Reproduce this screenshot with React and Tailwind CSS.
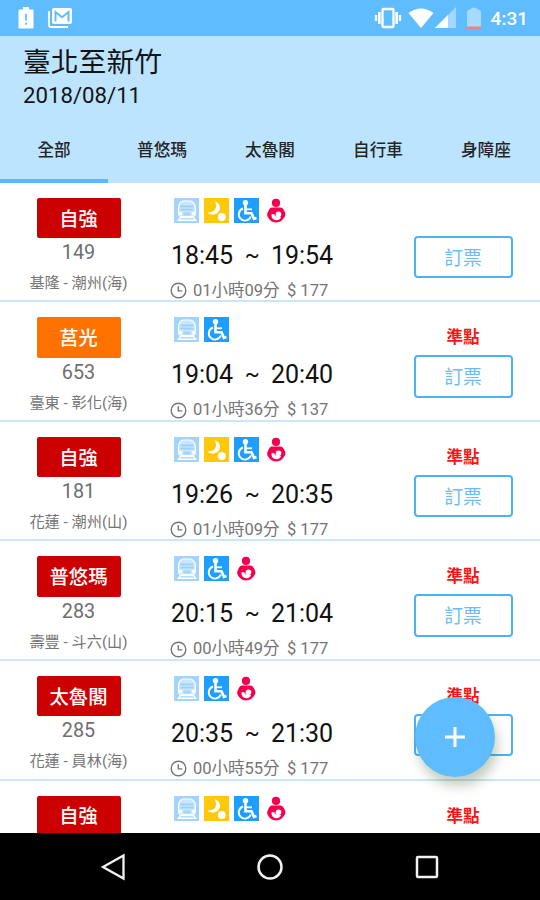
const TABS = ["全部", "普悠瑪", "太魯閣", "自行車", "身障座"];

const TRAINS = [
  { type: "自強", no: "149", route: "基隆 - 潮州(海)", icons: ["train", "night", "wheel", "baby"], from: "18:45", to: "19:54", duration: "01小時09分", price: 177 },
  { type: "莒光", no: "653", route: "臺東 - 彰化(海)", icons: ["train", "wheel"], from: "19:04", to: "20:40", duration: "01小時36分", price: 137, onTime: true },
  { type: "自強", no: "181", route: "花蓮 - 潮州(山)", icons: ["train", "night", "wheel", "baby"], from: "19:26", to: "20:35", duration: "01小時09分", price: 177, onTime: true },
  { type: "普悠瑪", no: "283", route: "壽豐 - 斗六(山)", icons: ["train", "wheel", "baby"], from: "20:15", to: "21:04", duration: "00小時49分", price: 177, onTime: true },
  { type: "太魯閣", no: "285", route: "花蓮 - 員林(海)", icons: ["train", "wheel", "baby"], from: "20:35", to: "21:30", duration: "00小時55分", price: 177, onTime: true },
  { type: "自強", no: "", route: "", icons: ["train", "night", "wheel", "baby"], onTime: true },
];

const TrainIcon = () => (
  <svg viewBox="0 0 25 25" className="size-[25px]">
    <rect width="25" height="25" fill="#a3d4fb" />
    <path d="M9 3h7.500q4.800 1.500 4.800 7v5q0 3.500-3 3.500H7.500q-3 0-3-3.500v-5Q4.500 4.500 9 3z" fill="#c9e6fd" stroke="#fff" strokeWidth="1.200" />
    <path d="M6.500 7.500h13v5h-13z" fill="#9acffa" />
    <path d="M6.500 10h13" stroke="#d9eefe" strokeWidth="1" />
    <path d="M5 14h3v3H5zM18 14h3v3h-3z" fill="#fff" />
    <path d="M9.500 14.500h7v3h-7z" fill="#a3d4fb" />
    <path d="M7 19.500h12M3.500 22.300h19M6.500 19l-1.500 3M19.500 19l1.500 3" fill="none" stroke="#fff" strokeWidth="1.500" />
  </svg>
);

const NightIcon = () => (
  <svg viewBox="0 0 25 25" className="size-[25px]">
    <rect width="25" height="25" fill="#ffc907" />
    <path d="M10.500 3C14 9 11.500 15 3.300 14.600 7.500 18.800 16.500 16 16 9.200 15.700 6 13 3.900 10.500 3z" fill="#fff" />
    <circle cx="17.800" cy="19" r="3.900" fill="#fff" />
  </svg>
);

const WheelIcon = () => (
  <svg viewBox="0 0 25 25" className="size-[25px]">
    <rect width="25" height="25" fill="#1e9fff" />
    <circle cx="11.500" cy="4.700" r="2.700" fill="#fff" />
    <g fill="none" stroke="#fff">
      <path d="M11.500 7v8.300h6l2.500 5.500 2.500-.8" strokeWidth="2.600" />
      <path d="M12 11.300h6" strokeWidth="1.800" />
      <path d="M9 10.500a6.200 6.200 0 1 0 7.800 8" strokeWidth="1.900" />
    </g>
  </svg>
);

const BabyIcon = () => (
  <svg viewBox="0 0 25 25" className="size-[25px]">
    <circle cx="12" cy="4.900" r="4.100" fill="#f5004f" />
    <path d="M8 9.500h8c2.500 0 3.800 2 4.700 4.300 1 2 .9 4.400-.5 5.800-1.800 3.200-4.600 4.900-7.700 4.900-3.800 0-6.600-1.500-8.300-4.700-1.500-1.900-1.300-4.100 0-6.200C5.100 11.300 6 9.500 8 9.500z" fill="#f5004f" />
    <circle cx="14.500" cy="16.300" r="2.800" fill="#fff" />
    <path d="M7.500 16.500c1.500-.8 3.200-.6 4.200.6 1.300 1.600 4.100 1 5.300 2.200-.6 2-2.500 2.900-4.700 2.900-2.900 0-5-2-4.800-5.700z" fill="#fff" />
    <path d="M9 15.300l3.300 3.200" stroke="#f5004f" strokeWidth=".8" />
  </svg>
);

const ClockIcon = () => (
  <svg viewBox="0 0 17 17" className="size-[17px]" fill="none" stroke="#757575" strokeWidth="1.400">
    <circle cx="8.500" cy="8.500" r="7.300" />
    <path d="M8.300 4.300v4.600h4" />
  </svg>
);

const ICONS = { train: TrainIcon, night: NightIcon, wheel: WheelIcon, baby: BabyIcon };

const StatusBar = () => (
  <div className="flex h-[35.5px] items-center justify-between bg-[#5fbcff] pl-[18px] pr-[12px]">
    <div className="flex items-center gap-[14px]">
      <svg viewBox="0 0 16 24" className="h-6 w-4">
        <path d="M1.500 3.500H5V1h6v2.500h3.500q1 0 1 1v17q0 1-1 1h-13q-1 0-1-1v-17q0-1 1-1z" fill="#fff" />
        <path d="M8 8v6.500M8 16.500v2.300" stroke="#5fbcff" strokeWidth="1.700" />
      </svg>
      <svg viewBox="0 0 24 22" className="h-[22px] w-6">
        <rect x="4" y="1" width="20" height="16" rx="2" fill="#fff" />
        <path d="M7.500 14.500V5l6.500 5.300L20.500 5v9.500" fill="none" stroke="#5fbcff" strokeWidth="1.900" />
        <path d="M1 4v14.500q0 1.500 1.500 1.500H20" fill="none" stroke="#fff" strokeWidth="1.800" />
      </svg>
    </div>
    <div className="flex items-center">
      <svg viewBox="0 0 28 22" className="mr-[6px] h-[22px] w-7" fill="none" stroke="#fff">
        <rect x="8.500" y="2" width="11" height="18" rx="1" strokeWidth="2.300" />
        <path d="M5.300 5v12M22.700 5v12" strokeWidth="2.600" />
        <path d="M2 8v6M26 8v6" strokeWidth="2.300" />
      </svg>
      <svg viewBox="0 0 26 20" className="mr-px h-5 w-[26px]">
        <path d="M.5 5Q13-4 25.500 5L13 20z" fill="#fff" />
      </svg>
      <svg viewBox="0 0 21 21" className="mr-[11px] h-[21px] w-[21px]">
        <path d="M21 0v21H0z" fill="#a2d8ff" />
        <path d="M13 8v13H0z" fill="#fff" />
      </svg>
      <svg viewBox="0 0 14 22" className="mr-[10px] h-[22px] w-[14px]">
        <path d="M0 4l3.500-2Q7-1 10.500 2L14 4v18H0z" fill="#a8daff" />
        <path d="M0 19.500h14V22H0z" fill="#ef8088" />
      </svg>
      <span className="pt-[3px] text-[19px] font-medium leading-6 text-white">4:31</span>
    </div>
  </div>
);

const Header = () => (
  <header className="h-[147px] bg-[#bde4ff] text-[#141414]">
    <h1 className="h-[44px] pl-[23px] pt-[7px] text-[27.800px] leading-[40px]">臺北至新竹</h1>
    <p className="h-[36px] pl-[23px] pt-px text-[22.200px] leading-[28px]">2018/08/11</p>
    <nav className="flex h-[67px]">
      {TABS.map((tab, i) => (
        <div
          key={tab}
          className={`flex w-[108px] justify-center border-b-[4.500px] pt-[24px] text-[16.600px] font-medium leading-[22px] text-[#262626] ${i === 0 ? "border-[#5cb9ff]" : "border-transparent"}`}
        >
          {tab}
        </div>
      ))}
    </nav>
  </header>
);

const TrainRow = ({ train }) => (
  <li className="flex h-[119.550px] shrink-0 border-b-2 border-[#cbe6fb]">
    <div className="flex w-[157px] flex-col items-center pt-[15px]">
      <div
        className={`flex h-[40.500px] w-[84px] items-center justify-center rounded-[2px] pt-[3px] text-[19.300px] font-medium leading-6 text-white ${train.type === "莒光" ? "bg-[#ff7200]" : "bg-[#cc0000]"}`}
      >
        {train.type}
      </div>
      <div className="mt-[2px] text-[19.800px] leading-[26px] text-[#6e6e6e]">{train.no}</div>
      <div className="mt-[7px] whitespace-nowrap text-[15.200px] leading-[20px] text-[#757575]">{train.route}</div>
    </div>
    <div className="w-[242.500px] pl-[17.400px] pt-[15px]">
      <div className="flex h-[25px] gap-[5px]">
        {train.icons.map((name) => {
          const Icon = ICONS[name];
          return <Icon key={name} />;
        })}
      </div>
      {train.from && (
        <>
          <div className="-ml-[3.500px] mt-[17px] flex text-[25px] leading-[32px] text-[#111]">
            <span className="w-[62.500px]">{train.from}</span>
            <span className="w-[37.500px] pb-[3px] text-center text-[22px] leading-[29px]">~</span>
            <span>{train.to}</span>
          </div>
          <div className="-ml-[4.500px] mt-[8px] flex items-center text-[16.500px] leading-[22px] text-[#757575]">
            <ClockIcon />
            <span className="ml-[6px]">{train.duration}</span>
            <span className="ml-[7.500px]">$ {train.price}</span>
          </div>
        </>
      )}
    </div>
    <div className="flex w-[127px] flex-col items-center pt-[25px]">
      <div className="h-[28px] text-[16.600px] font-bold leading-[22px] text-[#fb1414]">{train.onTime && "準點"}</div>
      {train.from && (
        <button className="h-[42.500px] w-[99px] rounded-[4px] border-2 border-[#4bb3f3] pt-[3px] text-[18.800px] leading-6 text-[#6bbcf8]">
          訂票
        </button>
      )}
    </div>
  </li>
);

const NavBar = () => (
  <div className="flex h-[67px] items-center justify-between bg-black pl-[100px] pr-[100px]">
    <svg viewBox="0 0 26 28" className="h-7 w-[26px]" fill="none" stroke="#f2f2f2" strokeWidth="2.300">
      <path d="M3 14L23.500 2.500v23z" />
    </svg>
    <svg viewBox="0 0 28 28" className="size-7" fill="none" stroke="#f2f2f2" strokeWidth="2.500">
      <circle cx="14" cy="14" r="11.500" />
    </svg>
    <svg viewBox="0 0 26 26" className="size-[26px]" fill="none" stroke="#f2f2f2" strokeWidth="2.500">
      <rect x="3" y="3" width="20" height="20" rx="1" />
    </svg>
  </div>
);

export default function App() {
  return (
    <div className="relative flex h-[900px] w-[540px] flex-col overflow-hidden bg-white font-['Roboto','Noto_Sans_CJK_TC',sans-serif]">
      <StatusBar />
      <Header />
      <ul className="flex min-h-0 flex-1 flex-col overflow-hidden pt-[0.300px]">
        {TRAINS.map((train, i) => (
          <TrainRow key={i} train={train} />
        ))}
      </ul>
      <NavBar />
      <button
        aria-label="+"
        className="absolute left-[415px] top-[697px] flex size-20 items-center justify-center rounded-full bg-[#5fbcff] shadow-[3px_9px_12px_rgba(60,90,40,0.3)]"
      >
        <svg viewBox="0 0 20 20" className="size-5" stroke="#fff" strokeWidth="3">
          <path d="M10 0v20M0 10h20" />
        </svg>
      </button>
    </div>
  );
}
